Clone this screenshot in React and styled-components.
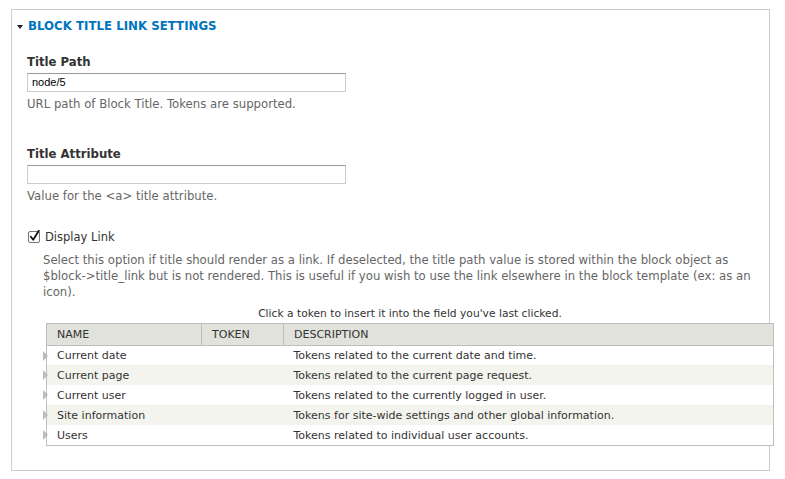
import React from "react";
import styled, { createGlobalStyle } from "styled-components";

const Global = createGlobalStyle`
  html, body { margin: 0; padding: 0; background: #fff; }
  body { font-family: "DejaVu Sans", "Liberation Sans", sans-serif; color: #333; }
`;

const Page = styled.div`
  padding: 9px 15px 0 11px;
  width: 785px;
  box-sizing: border-box;
`;

const Fieldset = styled.section`
  width: 759px;
  height: 462px;
  box-sizing: border-box;
  border: 1px solid #ccc;
  padding: 0 0 0 15px;
`;

const Legend = styled.div`
  display: flex;
  align-items: center;
  gap: 5px;
  height: 30px;
  box-sizing: border-box;
  padding-top: 2px;
  margin-left: -10px;
  font-size: 11.8px;
  font-weight: bold;
  text-transform: uppercase;
  color: #0074bd;
`;

const Caret = styled.span`
  width: 0;
  height: 0;
  border-left: 3.5px solid transparent;
  border-right: 3.5px solid transparent;
  border-top: 4px solid #222;
  margin-top: 1px;
`;

const Field = styled.div`
  margin-top: ${(p) => p.$top}px;
`;

const Label = styled.div`
  font-size: 11.7px;
  font-weight: bold;
  color: #333;
  height: 17px;
  line-height: 17px;
`;

const Input = styled.div`
  margin-top: 2px;
  width: 319px;
  height: 19px;
  box-sizing: border-box;
  border: 1px solid #ccc;
  border-top-color: #999;
  font-family: "Liberation Sans", Arial, sans-serif;
  font-size: 11px;
  line-height: 17px;
  padding-left: 4px;
  color: #000;
`;

const Desc = styled.div`
  font-size: 11.7px;
  color: #666;
  line-height: 16.3px;
  margin-top: ${(p) => p.$top || 0}px;
  padding-left: ${(p) => p.$indent || 0}px;
  width: ${(p) => p.$width || "auto"};
`;

const NoWrap = styled.span`
  white-space: nowrap;
`;

const CheckRow = styled.div`
  display: flex;
  align-items: center;
  gap: 4px;
  margin-top: 25px;
  margin-left: 1px;
  font-size: 11.5px;
  color: #333;
  height: 14px;
`;

const Hint = styled.div`
  width: 734px;
  text-align: center;
  font-size: 10.7px;
  color: #333;
  margin-top: 6px;
  line-height: 15px;
`;

const Table = styled.table`
  margin-left: 3px;
  margin-top: 1.5px;
  width: 728px;
  border-collapse: collapse;
  border: 1px solid #bebfb9;
  font-size: 11px;
  color: #333;
`;

const Th = styled.th`
  background: #e1e2dc;
  border: 1px solid #bebfb9;
  text-align: left;
  font-weight: normal;
  text-transform: uppercase;
  height: 22px;
  padding: 0 10px;
  width: ${(p) => p.$w || "auto"};
  box-sizing: border-box;
`;

const Tr = styled.tr`
  background: ${(p) => (p.$even ? "#f3f4ee" : "#fff")};
`;

const Td = styled.td`
  height: 20px;
  padding: 0 10px;
  position: relative;
  box-sizing: border-box;
`;

const Expander = styled.span`
  position: absolute;
  left: -4px;
  top: 5px;
  width: 0;
  height: 0;
  border-top: 5px solid transparent;
  border-bottom: 5px solid transparent;
  border-left: 5px solid #bbb;
`;

function Checkbox() {
  return (
    <svg width="13" height="14" viewBox="0 0 13 14">
      <rect x="0.5" y="1.5" width="11" height="11" rx="1.5" fill="#fff" stroke="#777" />
      <path d="M2.8 6.8 L5.2 9.8 L10.8 0.8" fill="none" stroke="#111" strokeWidth="1.8" strokeLinecap="round" strokeLinejoin="round" />
    </svg>
  );
}

const rows = [
  ["Current date", "Tokens related to the current date and time."],
  ["Current page", "Tokens related to the current page request."],
  ["Current user", "Tokens related to the currently logged in user."],
  ["Site information", "Tokens for site-wide settings and other global information."],
  ["Users", "Tokens related to individual user accounts."],
];

export default function App() {
  return (
    <Page>
      <Global />
      <Fieldset>
        <Legend>
          <Caret />
          Block title link settings
        </Legend>
        <Field $top={14}>
          <Label>Title Path</Label>
          <Input>node/5</Input>
          <Desc $top={4}>URL path of Block Title. Tokens are supported.</Desc>
        </Field>
        <Field $top={34}>
          <Label>Title Attribute</Label>
          <Input />
          <Desc $top={4}>Value for the &lt;a&gt; title attribute.</Desc>
        </Field>
        <CheckRow>
          <Checkbox />
          Display Link
        </CheckRow>
        <Desc $top={8} $indent={16} $width="720px">
          Select this option if title should render as a link. If deselected, the title path value is stored within the block object as <NoWrap>$block-&gt;title_link</NoWrap> but is not rendered. This is useful if you wish to use the link elsewhere in the block template (ex: as an icon).
        </Desc>
        <div style={{ paddingLeft: 16 }}>
          <Hint>Click a token to insert it into the field you've last clicked.</Hint>
          <Table>
            <thead>
              <tr>
                <Th $w="155px">Name</Th>
                <Th $w="82px">Token</Th>
                <Th>Description</Th>
              </tr>
            </thead>
            <tbody>
              {rows.map(([n, d], i) => (
                <Tr key={n} $even={i % 2 === 1}>
                  <Td>
                    <Expander />
                    {n}
                  </Td>
                  <Td />
                  <Td>{d}</Td>
                </Tr>
              ))}
            </tbody>
          </Table>
        </div>
      </Fieldset>
    </Page>
  );
}
